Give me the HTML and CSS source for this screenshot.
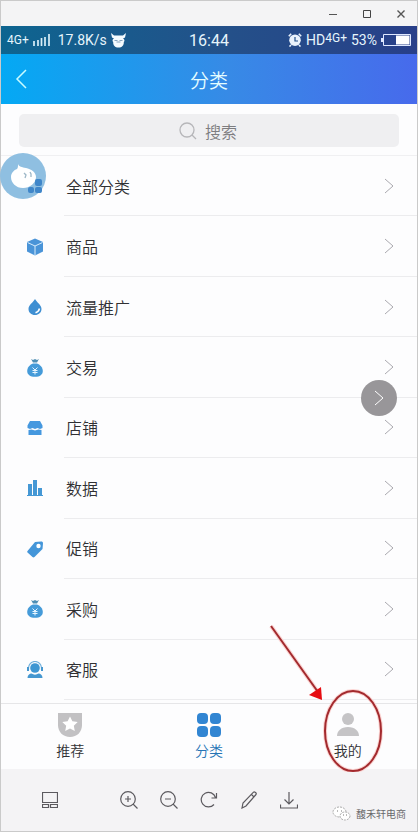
FILE: index.html
```html
<!DOCTYPE html>
<html lang="zh-CN">
<head>
<meta charset="utf-8">
<meta name="viewport" content="width=device-width, initial-scale=1">
<title>分类</title>
<link rel="stylesheet" href="styles.css">
</head>
<body>
<svg class="defs" aria-hidden="true">
  <symbol id="next" viewBox="0 0 10 16"><path d="M1 1l8 7-8 7" fill="none" stroke="currentColor"/></symbol>
  <symbol id="bag" viewBox="0 0 18 18"><path d="M5 0l2 1 2-1 2 1 2-1-2 3.500H7z" fill="#4f8fb5"/><path d="M7 4.500h4c3 1 5.800 4 5.800 7.500S14 17.800 9 17.800 1.200 15.500 1.200 12 4 5.500 7 4.500z" fill="currentColor"/><path d="M6.500 8.500L9 11l2.500-2.500M9 11v4.500M6.500 11.500h5M6.500 13.500h5" fill="none" stroke="#e6f5ff"/></symbol>
</svg>
<div class="window">
  <div class="titlebar">
    <button aria-label="最小化"><svg width="8" height="8"><path d="M0 4.500h8" stroke="#555"/></svg></button>
    <button aria-label="最大化"><svg width="8" height="8"><path d="M.5.5h7v7h-7z" fill="none" stroke="#444"/></svg></button>
    <button aria-label="关闭"><svg width="8" height="8"><path d="M.5.5l7 7M7.500.5l-7 7" stroke="#555" stroke-width="1.400"/></svg></button>
  </div>

  <div class="status">
    <div class="status-left">
      <span class="net">4G+</span>
      <svg width="17" height="12"><path d="M1 7v5M5 6v6M8.500 4v8M12 3v9M16 0v12" stroke="#d8eef7" stroke-width="1.700"/></svg>
      <span class="speed">17.8K/s</span>
      <svg width="15" height="15" viewBox="0 0 15 15"><path d="M0 0l3 2.500h9L15 0l-1 4.500-2 1c1.800 1 1.800 2.500.8 3.500.2 3.500-1.800 5.500-5.300 5.500S2 12.500 2.200 9c-1-1-1-2.500.8-3.500l-2-1z" fill="#f4fbff"/><path d="M3.500 7.500h3M8.500 7.500h3M5.500 9h4" stroke="#6d8fae" stroke-width=".8"/></svg>
    </div>
    <span class="clock">16:44</span>
    <div class="status-right">
      <svg width="14" height="14" viewBox="0 0 14 14"><path d="M.8 3.200l2.400-2.400M13.200 3.200L10.800.8M3 12l-1.500 1.500M11 12l1.500 1.500" stroke="#e9f2fc" stroke-width="1.600"/><circle cx="7" cy="7.200" r="5.800" fill="#e9f2fc"/><path d="M7 4v4h3" fill="none" stroke="#24508a" stroke-width="1.200"/></svg>
      <span class="hd">HD</span><span class="net raised">4G+</span>
      <span class="power">53%</span>
      <svg width="30" height="12"><path d="M2.500.5h27v11h-27z" fill="none" stroke="#dfe8ff"/><path d="M0 4h2v4H0z" fill="#dfe8ff"/><path d="M15 1.500h13.500v9H15z" fill="#fff"/></svg>
    </div>
  </div>

  <header class="header">
    <button class="back" aria-label="返回"><svg width="12" height="20"><path d="M11 1L2 10l9 9" fill="none" stroke="#c9fbff" stroke-width="1.500"/></svg></button>
    <h1>分类</h1>
  </header>

  <main class="content">
    <div class="search">
      <label class="search-box">
        <svg width="18" height="18"><circle cx="8" cy="8" r="7" fill="none" stroke="#b6b6b9" stroke-width="1.300"/><path d="M13 13l4 4" stroke="#b6b6b9" stroke-width="1.300"/></svg>
        <input type="text" placeholder="搜索" aria-label="搜索">
      </label>
    </div>
    <nav class="list">
      <a class="row" href="#all"><svg class="icon" viewBox="0 0 18 18" fill="#3f86c9"><rect x="9" y="2" width="6" height="6" rx="2"/><rect x="2" y="10" width="6" height="6" rx="2"/><rect x="9" y="10" width="6" height="6" rx="2"/></svg><span class="label">全部分类<svg class="next"><use href="#next"/></svg></span></a>
      <a class="row" href="#goods"><svg class="icon" viewBox="0 0 18 18"><path d="M9 0.500l8 3.500v9.500l-8 4-8-4V4z" fill="#4a94d8"/><path d="M1.500 4.500L9 8l7.500-3.500M9 8v9.500" fill="none" stroke="#d9edfc" stroke-width="1"/></svg><span class="label">商品<svg class="next"><use href="#next"/></svg></span></a>
      <a class="row" href="#traffic"><svg class="icon" viewBox="0 0 18 18"><path d="M9 1c2 3.500 6.500 6 6.500 10 0 3.500-2.800 6-6.500 6s-6.500-2.500-6.500-6c0-4 4.500-6.500 6.500-10z" fill="#3f8fd2"/><path d="M13.500 10.500c-.5 2.200-2 3.600-4 4.200" fill="none" stroke="#fff" stroke-width="1.500"/></svg><span class="label">流量推广<svg class="next"><use href="#next"/></svg></span></a>
      <a class="row" href="#trade"><svg class="icon"><use href="#bag"/></svg><span class="label">交易<svg class="next"><use href="#next"/></svg></span></a>
      <a class="row" href="#shop"><svg class="icon" viewBox="0 0 18 18" fill="#4598df"><path d="M4 2h10l2.500 4.500V9l-2.500 1-2.500-1L9 10 6.500 9 4 10 1.500 9V6.500z"/><path d="M2.500 11l3-.5 3.500 1 3.500-1 3 .5v5h-13z"/></svg><span class="label">店铺<svg class="next"><use href="#next"/></svg></span></a>
      <a class="row" href="#data"><svg class="icon" viewBox="0 0 18 18" fill="#4598d5"><path d="M2 5h4v11H2zM7 1h4v15H7zM12 9h4v7h-4zM1 16h16v1H1z"/></svg><span class="label">数据<svg class="next"><use href="#next"/></svg></span></a>
      <a class="row" href="#promo"><svg class="icon" viewBox="0 0 18 18"><path d="M9 2l6-.5c1.500 0 2 .5 2 2L16.500 9l-8 8c-.7.500-1.500.5-2 0l-5-4.500c-.5-.5-.5-1 0-1.500z" fill="#4496d9"/><circle cx="12.500" cy="6" r="2.200" fill="#fff"/></svg><span class="label">促销<svg class="next"><use href="#next"/></svg></span></a>
      <a class="row" href="#buy"><svg class="icon"><use href="#bag"/></svg><span class="label">采购<svg class="next"><use href="#next"/></svg></span></a>
      <a class="row" href="#service"><svg class="icon" viewBox="0 0 18 18"><circle cx="9" cy="7" r="4.800" fill="#3e96d2"/><path d="M2.500 9V7a6.500 6.500 0 0 1 13 0v2" fill="none" stroke="#6daedb" stroke-width="1.200"/><path d="M1 6h2v4H1zM15 6h2v4h-2zM1.500 17c0-3 2-4.500 4-4.500 2 1.500 5 1.500 7 0 2 0 4 1.500 4 4.500z" fill="#4597d0"/></svg><span class="label">客服<svg class="next"><use href="#next"/></svg></span></a>
    </nav>
    <button class="assistant" aria-label="助手"><svg width="46" height="46"><path d="M18 11c1 3 4 3 8 4 5 1 10 4 10 9 0 6-6 11-13 11S11 30 11 24c0-4 3-7 6-8 1-1 1-3 1-5z" fill="#fff"/><path d="M24 20l2 2-1 3M30 19l1 2v3" fill="none" stroke="#9db7c7" stroke-width="1.300"/><g fill="#3f86c9"><rect x="35" y="26" width="7" height="7" rx="2"/><rect x="28" y="34" width="6" height="6" rx="2"/><rect x="35" y="34" width="7" height="6" rx="2"/></g></svg></button>
    <button class="float-next" aria-label="下一张"><svg width="10" height="16"><use href="#next"/></svg></button>
  </main>

  <nav class="tabs">
    <a href="#recommend"><svg width="24" height="24"><path d="M0 0h24v12c0 7-5 12-12 12S0 19 0 12z" fill="#c2c1c3"/><path d="M12 3.500l2.400 4.800 5.300.8-3.900 3.700 1 5.300-4.800-2.500-4.800 2.500 1-5.300-3.900-3.700 5.300-.8z" fill="#fff"/></svg><span>推荐</span></a>
    <a href="#category" class="active"><svg width="24" height="24" fill="#3185d2"><rect width="11" height="11" rx="4"/><rect x="13" width="11" height="11" rx="4"/><rect y="13" width="11" height="11" rx="4"/><rect x="13" y="13" width="11" height="11" rx="4"/></svg><span>分类</span></a>
    <a href="#mine"><svg width="24" height="24" fill="#c5c4c6"><circle cx="12" cy="6" r="6"/><path d="M1 23c0-5 4-9 11-9s11 4 11 9z"/></svg><span>我的</span></a>
    <svg class="mark" width="116" height="150" viewBox="0 0 116 150"><g fill="none" stroke="#fbd5d3" stroke-width="4"><path d="M4 4l47 66"/><ellipse cx="86" cy="109" rx="28" ry="40"/></g><g fill="none" stroke="#a32a2e" stroke-width="2"><path d="M4 4l47 66"/><ellipse cx="86" cy="109" rx="28" ry="40"/></g><path d="M55 78l-13-5 12-8z" fill="#e60d12"/></svg>
  </nav>

  <footer class="tools">
    <button class="layout" aria-label="缩略图"><svg width="16" height="16"><path d="M.5.5h15v10H.5zM.5 12.500h6v3h-6zM8.500 12.500h7v3h-7z"/></svg></button>
    <button aria-label="放大"><svg width="18" height="18"><circle cx="8" cy="8" r="7.300"/><path d="M13 13l4.500 4.500M5 8h6M8 5v6"/></svg></button>
    <button aria-label="缩小"><svg width="18" height="18"><circle cx="8" cy="8" r="7.300"/><path d="M13 13l4.500 4.500M5 8h6"/></svg></button>
    <button aria-label="旋转"><svg width="18" height="18"><path d="M14 13.500A7.300 7.300 0 1 1 15.500 6.500M16.500 2v5H11.500"/></svg></button>
    <button aria-label="编辑"><svg width="18" height="18"><path d="M2 17l1-5L13.500 1.200c1-.8 3.500 1 2.500 2.300L6 15zM11.500 3.500L14 6"/></svg></button>
    <button aria-label="下载"><svg width="18" height="18"><path d="M9 1v12M4.500 8.500L9 13l4.500-4.500M.5 13.500v3.500h17v-3.500"/></svg></button>
    <div class="account"><svg width="19" height="16"><g fill="#fff" stroke="#aaa" stroke-dasharray="2 1"><ellipse cx="7.500" cy="6" rx="6.500" ry="5"/><ellipse cx="13" cy="10" rx="5" ry="4"/></g><path d="M5 5h1M9 5h1M11 9h1M14 9h1" stroke="#777"/></svg><span>馥禾轩电商</span></div>
  </footer>
</div>
</body>
</html>
```
FILE: styles.css
```css
* { box-sizing: border-box; }
body {
  margin: 0;
  font-family: "Noto Sans CJK SC", sans-serif;
  color: #303033;
}
button {
  display: flex;
  align-items: center;
  justify-content: center;
  padding: 0;
  border: 0;
  background: none;
}
a { color: inherit; text-decoration: none; }
svg { display: block; flex: none; }
.defs { position: absolute; width: 0; height: 0; }

.window {
  display: flex;
  flex-direction: column;
  min-height: 100vh;
  border: 1px solid #cacaca;
  background: #fdfdfe;
}
.titlebar {
  display: flex;
  justify-content: flex-end;
  gap: 26px;
  height: 25px;
  padding-right: 12px;
  background: #f4f4f5;
}

.status {
  display: grid;
  grid-template-columns: 1fr auto 1fr;
  align-items: center;
  height: 28px;
  padding: 0 6px;
  background: linear-gradient(90deg, #0d6590, #245089 55%, #283f89);
  color: #e6f5fc;
  font-family: Roboto, sans-serif;
  font-size: 14px;
}
.status-left, .status-right { display: flex; align-items: center; }
.status-left { gap: 4px; }
.status-right { justify-content: flex-end; gap: 4px; }
.net { font-size: 12px; }
.speed { padding-left: 4px; }
.clock { font-size: 16px; }
.raised { margin-left: -4px; padding-bottom: 4px; }

.header {
  display: grid;
  grid-template-columns: 40px 1fr 40px;
  align-items: center;
  height: 50px;
  background: linear-gradient(90deg, #04a9f4, #378ae6 55%, #476aec);
  color: #e4fdff;
}
.back { height: 50px; }
.header h1 {
  margin: 0;
  font-size: 19px;
  font-weight: 350;
  text-align: center;
}

.content {
  position: relative;
  display: flex;
  flex: 1;
  flex-direction: column;
  padding-bottom: 3px;
}
.search {
  padding: 10px 18px 8px;
  border-bottom: 1px solid #f0f0f2;
}
.search-box {
  display: flex;
  align-items: center;
  justify-content: center;
  gap: 8px;
  height: 33px;
  border-radius: 5px;
  background: #efeff1;
}
.search-box input {
  width: 34px;
  padding: 0;
  border: 0;
  background: none;
  font: 350 16px/24px "Noto Sans CJK SC", sans-serif;
}
.search-box input::placeholder { color: #7d7d80; opacity: 1; }

.list {
  display: grid;
  flex: 1;
  grid-auto-rows: minmax(48px, 1fr);
}
.row {
  display: flex;
  align-items: center;
  padding-left: 25px;
}
.icon { width: 18px; height: 18px; color: #459bd9; }
.label {
  display: flex;
  flex: 1;
  align-items: center;
  justify-content: space-between;
  height: 100%;
  margin-left: 20px;
  padding: 0 23px 0 2px;
  border-bottom: 1px solid #ececee;
  font-size: 16px;
  font-weight: 350;
}
.next { width: 10px; height: 16px; color: #aaa9af; }

.assistant {
  position: absolute;
  top: 49px;
  left: -1px;
  width: 46px;
  height: 46px;
  border-radius: 50%;
  background: #8fbfe1;
}
.float-next {
  position: absolute;
  top: 276px;
  right: 20px;
  width: 36px;
  height: 36px;
  border-radius: 50%;
  background: #989699;
  color: #fff;
}

.tabs {
  position: relative;
  display: grid;
  grid-template-columns: repeat(3, 1fr);
  height: 66px;
  border-top: 1px solid #e6e6e8;
}
.tabs a {
  display: flex;
  flex-direction: column;
  align-items: center;
  gap: 3px;
  padding-top: 9px;
  font-size: 14px;
  font-weight: 350;
  line-height: 20px;
}
.tabs .active { color: #2574b5; }
.mark {
  position: absolute;
  right: 34px;
  bottom: -3px;
  pointer-events: none;
}

.tools {
  display: flex;
  align-items: center;
  gap: 22px;
  height: 62px;
  padding-left: 41px;
  background: #f4f3f5;
}
.tools button svg { fill: none; stroke: #5c5a5f; stroke-width: 1.2; }
.tools .layout { margin-right: 40px; }
.account {
  display: flex;
  align-items: center;
  align-self: flex-end;
  gap: 5px;
  margin: 0 11px 7px auto;
  color: #68686b;
  font-size: 10px;
  line-height: 20px;
  white-space: nowrap;
}
```
